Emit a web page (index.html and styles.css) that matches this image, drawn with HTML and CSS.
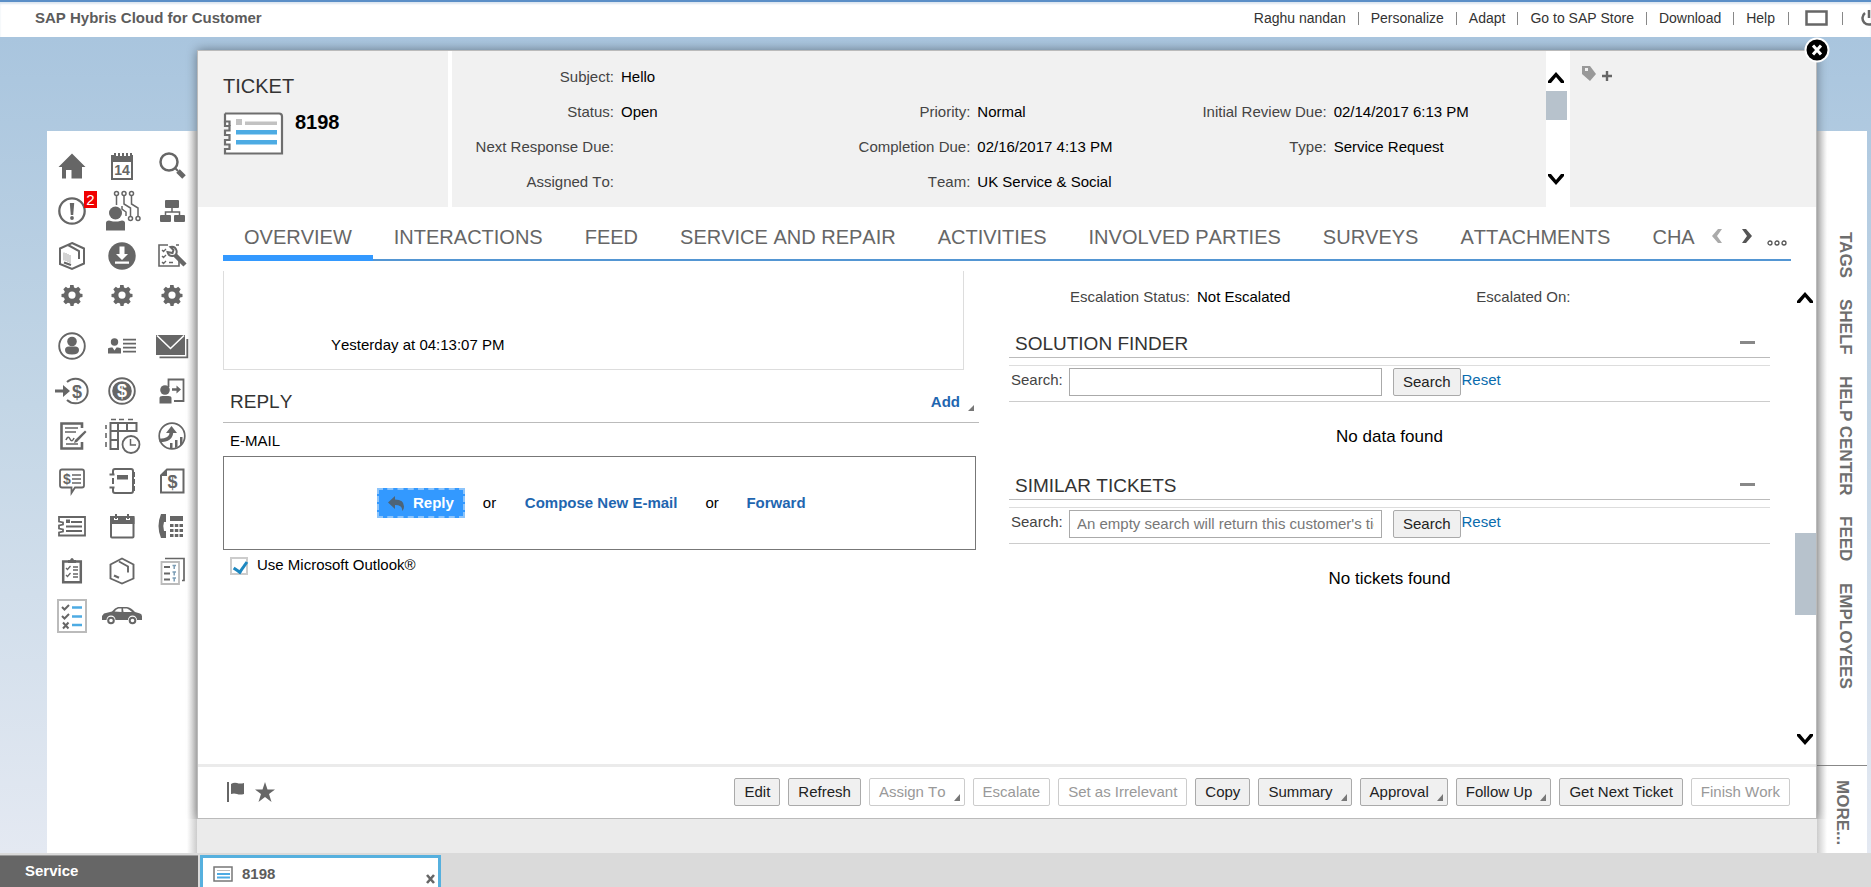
FILE: index.html
```html
<!DOCTYPE html>
<html lang="en">
<head>
    <meta charset="UTF-8">
    <meta name="viewport" content="width=device-width, initial-scale=1.0">
    <title>SAP Hybris Cloud for Customer</title>
    <link rel="stylesheet" href="styles.css">
</head>
<body>
    <header class="topbar">
        <div class="brand">SAP Hybris Cloud for Customer</div>
        <nav class="top-links">
            <a href="#">Raghu nandan</a>
            <a href="#">Personalize</a>
            <a href="#">Adapt</a>
            <a href="#">Go to SAP Store</a>
            <a href="#">Download</a>
            <a href="#">Help</a>
            <a href="#" aria-label="Window"><svg width="24" height="16" viewBox="0 0 24 16"><rect x="1.5" y="1.5" width="20" height="13" fill="none" stroke="#666" stroke-width="2.500"/></svg></a>
            <a href="#" aria-label="Log off"><svg width="20" height="18" viewBox="0 0 20 18"><path d="M6 4a6.500 6.500 0 1 0 8 0M10 1v8" fill="none" stroke="#666" stroke-width="2.500"/></svg></a>
        </nav>
    </header>

    <div class="workspace">
        <nav class="sidebar">
            <div class="icon-grid pinned">
                <a href="#" aria-label="Home"><svg class="icon" viewBox="0 0 40 40"><path class="f" d="M20 7.500 33.500 21H30v11.500H19.500V24H14v8.500h-4V21H6.500z"/></svg></a>
                <a href="#" aria-label="Calendar"><svg class="icon" viewBox="0 0 40 40"><path class="f" d="M9 9h3V7h2v3h2V7h2v3h2V7h2v3h2V7h2v3h2V7h2v2h1v25H9zm2 7v16h18V16z" fill-rule="evenodd"/><text x="20" y="29" text-anchor="middle" class="cal-day">14</text></svg></a>
                <a href="#" aria-label="Search"><svg class="icon" viewBox="0 0 40 40"><circle class="s" cx="17" cy="16" r="8.500" stroke-width="2.500"/><path class="s" d="m23 22 3 3" stroke-width="2"/><path class="s" d="m26 25 6 6" stroke-width="5"/></svg></a>

                <a href="#" aria-label="Alerts" class="has-badge"><svg class="icon" viewBox="0 0 40 40"><circle class="s" cx="20" cy="20" r="12.700" stroke-width="2.300"/><path class="f" d="M17.800 12h4.400l-1 12h-2.400z"/><circle class="f" cx="20" cy="27" r="1.900"/></svg><span class="badge">2</span></a>
                <a href="#" aria-label="Social"><svg class="icon" viewBox="0 0 40 40"><circle class="f" cx="13.500" cy="22" r="6.500"/><path class="f" d="M4 39.500V32q0-2.500 3-2.500l4 1h5l4-1q3 0 3 2.500v7.500z"/><g class="s" stroke-width="1.500"><circle cx="14.500" cy="2.500" r="2"/><circle cx="22" cy="2.500" r="2"/><circle cx="29.500" cy="2.500" r="2"/><circle cx="28.500" cy="27.500" r="2"/><circle cx="36" cy="27.500" r="2"/><path d="M14.500 4.500V14M22 4.500V13l6.500 4v8.500M29.500 4.500V13l6.500 4v8.500M20 15v3l4 3v4"/></g></svg></a>
                <a href="#" aria-label="Organization"><svg class="icon" viewBox="0 0 40 40"><rect class="f" x="13" y="9" width="14" height="8" rx="1"/><rect class="f" x="8" y="24" width="11" height="7" rx="1"/><rect class="f" x="22" y="24" width="11" height="7" rx="1"/><path class="s" d="M20 17v4M13.500 24v-3h14v3" stroke-width="1.500"/></svg></a>

                <a href="#" aria-label="Products"><svg class="icon" viewBox="0 0 40 40"><path class="s" d="m20 7 12 5.500v15L20 33 8 28V12.500zM16 9l11 6v8" stroke-width="2"/><path class="s light" d="M12 16.500v8M14 17v8M16 18v8M18 19v8" stroke-width="1.300"/><path class="s" d="m12 26.500 7 2.500" stroke-width="2"/></svg></a>
                <a href="#" aria-label="Downloads"><svg class="icon" viewBox="0 0 40 40"><circle class="f" cx="20" cy="20" r="13.700"/><path fill="#fff" d="M17.500 10.500h5V18H26l-6 6-6-6h3.500zM13 25.500h14v2.200H13z"/></svg></a>
                <a href="#" aria-label="Service check"><svg class="icon" viewBox="0 0 40 40"><path class="s" d="M16 9H7v21h20v-5M24 9h3" stroke-width="1.600"/><path class="s" d="m10 14 1.500 1.500L14 13M10 20l1.500 1.500L14 19M10 26l1.500 1.500L14 25M17 26.500h4" stroke-width="1.300"/><path class="s" d="M15.500 16q1 4.500 5.500 4 4.500-1 3.500-5.500-1.500-4.500-6-3.500l3 3-1 3z" stroke-width="2"/><path class="s" d="m23 19 10 10" stroke-width="4.500"/></svg></a>

                <a href="#" aria-label="Settings"><svg class="icon" viewBox="0 0 40 40"><path id="gear" class="f" fill-rule="evenodd" d="m18 10.200.400-.200h3.200l.400 2.500 2 .800 2.200-1.500 2.500 2.500-1.500 2.200.800 2 2.500.500v3l-2.500.500-.800 2 1.500 2.200-2.500 2.500-2.200-1.500-2 .800-.500 2.500h-3l-.500-2.500-2-.800-2.200 1.500-2.500-2.500 1.500-2.200-.800-2-2.500-.500v-3l2.500-.500.800-2-1.500-2.200 2.500-2.500 2.200 1.500 2-.800zM20 16.500a3.600 3.600 0 1 0 0 7.200 3.600 3.600 0 0 0 0-7.200z"/></svg></a>
                <a href="#" aria-label="Settings"><svg class="icon" viewBox="0 0 40 40"><use href="#gear"/></svg></a>
                <a href="#" aria-label="Settings"><svg class="icon" viewBox="0 0 40 40"><use href="#gear"/></svg></a>
            </div>

            <div class="icon-grid">
                <a href="#" aria-label="Customers"><svg class="icon" viewBox="0 0 40 40"><circle class="s" cx="20" cy="20" r="12.800" stroke-width="1.900"/><circle class="f" cx="20" cy="15.500" r="4.800"/><path class="f" d="M13 24q0-3.500 4-3.500h6q4 0 4 3.500 0 4.500-7 4.500T13 24z"/></svg></a>
                <a href="#" aria-label="Contacts"><svg class="icon" viewBox="0 0 40 40"><circle class="f" cx="12.500" cy="16" r="3.700"/><path class="f" d="M6 27.500V23q0-1.500 3-1.500h1.500l2 3 2-3H16q3 0 3 1.500v4.500z"/><path class="s" d="M21 13.700h13M21 17.700h13M21 21.700h13M21 25.700h13" stroke-width="1.700"/></svg></a>
                <a href="#" aria-label="E-mail"><svg class="icon" viewBox="0 0 40 40"><path class="f" d="M4 9h29v20H4z"/><path d="m5 9.500 13.500 13L32 9.500" fill="none" stroke="#fff" stroke-width="1.600"/><path class="s" d="M35.300 13v18.300H7.500" stroke-width="1.800"/></svg></a>

                <a href="#" aria-label="Leads"><svg class="icon" viewBox="0 0 40 40"><path class="s" d="M15 11a12.300 12.300 0 1 1 0 18" stroke-width="2"/><path class="f" d="M3 18.500h8V14l7 6-7 6v-4.500H3z"/><text x="25" y="26.500" class="dollar">$</text></svg></a>
                <a href="#" aria-label="Opportunities"><svg class="icon" viewBox="0 0 40 40"><circle class="s" cx="20" cy="20" r="12.800" stroke-width="1.900"/><circle class="f" cx="20" cy="20" r="9.800"/><text x="20" y="26" class="dollar inverse">$</text></svg></a>
                <a href="#" aria-label="Visits"><svg class="icon" viewBox="0 0 40 40"><path class="s" d="M16.500 16V8.500h15v21.500H22" stroke-width="1.800"/><circle class="f" cx="13" cy="19" r="4.800"/><path class="f" d="M7.500 32.500V27q0-2 3-2h6q3 0 3 2v5.500z"/><path class="s" d="M20 18.500h6" stroke-width="2.500"/><path class="f" d="m24.500 14.500 4.500 4-4.500 4z"/></svg></a>

                <a href="#" aria-label="Contracts"><svg class="icon" viewBox="0 0 40 40"><path class="s" d="M30 12V7.500H9.500V32.500H30V26" stroke-width="2.600"/><path class="s" d="M13 12h13M13 16h11M14 28h12M14 24q2-5 4-1t4-1" stroke-width="1.600"/><path class="f" d="m33 14.500 1.500 1.500-9.500 10-3 1 1-3z"/></svg></a>
                <a href="#" aria-label="Time recording"><svg class="icon" viewBox="0 0 40 40"><path class="s" d="M8.500 7h26v8H16v18H8.500zM16 7v8M25 7v8M8.500 15H16M8.500 24H16" stroke-width="2"/><path class="s" d="M9 3.500h5M17 3.500h5M26 3.500h5M4 9v4M4 17v5M4 26v5" stroke-width="1.600"/><circle cx="29" cy="28.500" r="8.500" fill="#fff" stroke="#666" stroke-width="1.800"/><path class="s" d="M28.500 23v6H34" stroke-width="1.500"/></svg></a>
                <a href="#" aria-label="Forecast"><svg class="icon" viewBox="0 0 40 40"><circle class="s" cx="20" cy="20" r="12.800" stroke-width="1.700"/><path class="f" d="M18 32v-5h2.500v5zm5 0V24h2.500v7zm5-2v-9h2.500v7z"/><path class="s" d="M7.500 24.500q12 0 12-9" stroke-width="3.500"/><path class="f" d="m14 17 5.500-7 5.500 7z"/></svg></a>

                <a href="#" aria-label="Quotes"><svg class="icon" viewBox="0 0 40 40"><path class="s" d="M10 8.500h20q2 0 2 2v14q0 2-2 2h-7l-3.500 5.500v-5.500H10q-2 0-2-2v-14q0-2 2-2z" stroke-width="1.800"/><text x="15" y="23" class="dollar small">$</text><path class="s" d="M20 14h9M20 18h9M20 22h9" stroke-width="1.700"/></svg></a>
                <a href="#" aria-label="Notebook"><svg class="icon" viewBox="0 0 40 40"><path class="s" d="M11 13v-3q0-2 2-2h16q2 0 2 2v20q0 2-2 2H13q-2 0-2-2v-3M11 17v6" stroke-width="2"/><path class="f" d="M15 14h11v4.500H15zM30 11h3v5h-3zm0 7h3v5h-3zm0 7h3v5h-3z"/><path class="s" d="M7.500 13.500h5M7.500 26.500h5" stroke-width="2"/></svg></a>
                <a href="#" aria-label="Invoices"><svg class="icon" viewBox="0 0 40 40"><path class="s" d="M15 8.500h16.500v23H9V14.500z" stroke-width="2"/><path class="f" d="M15 8v7H8.500z"/><text x="20.500" y="27" class="dollar">$</text></svg></a>

                <a href="#" aria-label="Tickets"><svg class="icon" viewBox="0 0 40 40"><path class="s" d="M7 11h26v18.500H7v-3l4-1v-2l-4-1v-3l4-1v-2l-4-1z" stroke-width="1.800"/><path class="f" d="M14 13.500h4v3.500h-4z"/><path class="s" d="M19 16h11M14 20.500h16M14 25h16" stroke-width="1.900"/></svg></a>
                <a href="#" aria-label="Appointments"><svg class="icon" viewBox="0 0 40 40"><rect class="s" x="9" y="11" width="22.500" height="20.500" rx="1" stroke-width="2"/><path class="f" d="M8 10h4v4h4v-4h8v4h4v-4h4.500v8H8zM13 8h2v5h-2zm12 0h2v5h-2z"/></svg></a>
                <a href="#" aria-label="Phone calls"><svg class="icon" viewBox="0 0 40 40"><path class="f" d="M9 8h5v8h-2q-1.500 4 0 9h2v7H9q-5-12 0-24zM18 10h13v5H18zM18 18h3.500v3H18zm4.800 0h3.500v3h-3.500zm4.700 0H31v3h-3.500zM18 23h3.500v3H18zm4.800 0h3.500v3h-3.500zm4.700 0H31v3h-3.500zM18 28h3.500v3H18zm4.800 0h3.500v3h-3.500zm4.700 0H31v3h-3.500z"/></svg></a>

                <a href="#" aria-label="Tasks"><svg class="icon" viewBox="0 0 40 40"><path class="s" d="M11.200 10.500h17.600v20.800H11.200z" stroke-width="2.500"/><path class="f" d="M16 12V9h2q2-4 4 0h2v3z"/><path class="s" d="m14 17 1.500 1.500L18.500 15M14 24l1.500 1.500L18.500 22M21 16h5M21 19h5M21 23h5M21 26h5" stroke-width="1.300"/></svg></a>
                <a href="#" aria-label="Packages"><svg class="icon" viewBox="0 0 40 40"><path class="s" d="m20 7.500 11.500 6v14L20 32.500 8.500 27.500v-14zM17 10.500l9 5v6" stroke-width="1.900"/><path class="s" d="m12 24.500 5 2.200" stroke-width="2.200"/></svg></a>
                <a href="#" aria-label="Surveys"><svg class="icon" viewBox="0 0 40 40"><path class="s" d="M13 7.500h19v22h-2" stroke-width="1.700"/><path class="s light" d="M9.500 11H27v22H9.500z" stroke-width="1.800"/><path class="s" d="M12 16h6M12 22.500h6M12 28.500h6" stroke-width="1.800"/><path d="M20.500 14.500H24M22.200 14v4M20.500 21H24M22.200 21v3.500M20.500 27H24M22.200 27v3.500" fill="none" stroke="#7c9db5" stroke-width="1.500"/></svg></a>

                <a href="#" aria-label="Checklists"><svg class="icon" viewBox="0 0 40 40"><path class="s light" d="M6 4h28v32H6z" stroke-width="2"/><path class="s" d="m10 11 2.500 2.500L17 9M10 20l2.500 2.500L17 18M11 26.500l5.500 6M16.500 26.500l-5.500 6" stroke-width="2"/><path d="M20 11.500h10M20 20.500h10M20 29h10" fill="none" stroke="#4dabe3" stroke-width="2.400"/></svg></a>
                <a href="#" aria-label="Vehicles"><svg class="icon" viewBox="0 0 40 40"><path class="f" d="M0 24v-4l2-2.500 8-2q3-4 6-4.500h9q4 .500 8 5l5 1.500q2 .500 2 3v3.500h-5a4.500 4.500 0 0 0-9 0H13.500a4.500 4.500 0 0 0-9 0z"/><path d="M12.500 15.500q2-2.500 4-3h3v3.500zM21 12.500h4q2 .500 5 3.500h-8.500z" fill="#fff"/><circle class="s" cx="9" cy="24.500" r="2.800" stroke-width="2"/><circle class="s" cx="30.500" cy="24.500" r="2.800" stroke-width="2"/></svg></a>
            </div>
        </nav>

        <div class="stage">
            <section class="panel">
                <button class="close-btn" aria-label="Close"><svg width="26" height="26" viewBox="0 0 26 26"><circle cx="13" cy="13" r="11.500" fill="#000" stroke="#fff" stroke-width="2"/><path d="m9 8.500 8 9M17 8.500l-8 9" stroke="#fff" stroke-width="3"/></svg></button>

                <div class="ticket-header">
                    <div class="ticket-id">
                        <h1>TICKET</h1>
                        <div class="ticket-number">
                            <svg width="61" height="43" viewBox="0 0 61 43"><path d="M2 1.500h54q3 0 3 3v37H2V37h4.500v-4.500H2V28h4.500v-5H2v-4.500h4.500V14H2V9.500" fill="#fff" stroke="#6e6e6e" stroke-width="2.200"/><path d="M2 1.500v8h4.500V14" fill="none" stroke="#6e6e6e" stroke-width="2.200"/><path d="M13 7h6v6h-6zM22 9.500h32V13H22z" fill="#c2c2c2"/><path d="M13 18h41v4.500H13zM13 28h41v4.500H13z" fill="#4dabe3"/></svg>
                            <strong>8198</strong>
                        </div>
                    </div>
                    <dl class="facts">
                        <div class="fact"><dt>Subject:</dt><dd>Hello</dd></div>
                        <div class="fact start"><dt>Status:</dt><dd>Open</dd></div>
                        <div class="fact"><dt>Priority:</dt><dd>Normal</dd></div>
                        <div class="fact"><dt>Initial Review Due:</dt><dd>02/14/2017 6:13 PM</dd></div>
                        <div class="fact"><dt>Next Response Due:</dt><dd></dd></div>
                        <div class="fact"><dt>Completion Due:</dt><dd>02/16/2017 4:13 PM</dd></div>
                        <div class="fact"><dt>Type:</dt><dd>Service Request</dd></div>
                        <div class="fact"><dt>Assigned To:</dt><dd></dd></div>
                        <div class="fact"><dt>Team:</dt><dd>UK Service &amp; Social</dd></div>
                    </dl>
                    <div class="scroller header-scroller">
                        <button aria-label="Scroll up"><svg width="16" height="12" viewBox="0 0 16 12"><path d="m0 10 8-9 8 9v2h-3L8 6l-5 6H0z"/></svg></button>
                        <div class="thumb"></div>
                        <button aria-label="Scroll down" class="down"><svg width="16" height="12" viewBox="0 0 16 12"><path d="m0 2 8 9 8-9V0h-3L8 6 3 0H0z"/></svg></button>
                    </div>
                    <div class="tagging">
                        <button aria-label="Add tag"><svg width="32" height="18" viewBox="0 0 32 18"><path d="M1 1h8l6 8-6 7L1 9zm3 2v3h3V3z" fill="#999" fill-rule="evenodd"/><path d="M21 11h10M26 6v10" stroke="#666" stroke-width="2.400"/></svg></button>
                    </div>
                </div>

                <div class="tabbar">
                    <nav class="tabs">
                        <a href="#" class="active">OVERVIEW</a>
                        <a href="#">INTERACTIONS</a>
                        <a href="#">FEED</a>
                        <a href="#">SERVICE AND REPAIR</a>
                        <a href="#">ACTIVITIES</a>
                        <a href="#">INVOLVED PARTIES</a>
                        <a href="#">SURVEYS</a>
                        <a href="#">ATTACHMENTS</a>
                        <a href="#">CHA</a>
                    </nav>
                    <div class="tab-controls">
                        <button aria-label="Previous tabs"><svg width="12" height="14" viewBox="0 0 12 14"><path d="M7 0h4L6 7l5 7H7L1 7z" fill="#aaa"/></svg></button>
                        <button aria-label="Next tabs"><svg width="12" height="14" viewBox="0 0 12 14"><path d="M5 0H1l5 7-5 7h4l6-7z" fill="#555"/></svg></button>
                        <button aria-label="More tabs" class="more"><svg width="20" height="6" viewBox="0 0 20 6"><g fill="none" stroke="#555" stroke-width="1.300"><circle cx="3" cy="3" r="2"/><circle cx="10" cy="3" r="2"/><circle cx="17" cy="3" r="2"/></g></svg></button>
                    </div>
                </div>

                <div class="content">
                    <div class="columns">
                        <div class="column">
                            <div class="message">Yesterday at 04:13:07 PM</div>
                            <div class="reply-title">
                                <h2>REPLY</h2>
                                <button class="add-btn">Add</button>
                            </div>
                            <div class="channel">E-MAIL</div>
                            <div class="reply-box">
                                <button class="reply-btn"><svg width="17" height="15" viewBox="0 0 17 15"><path d="M7 0v3.500q9 0 9 7 0 3-2 4.500 1-6-7-6V13L0 6.500z" fill="#4d6478"/></svg>Reply</button>
                                <span>or</span>
                                <a href="#">Compose New E-mail</a>
                                <span>or</span>
                                <a href="#">Forward</a>
                            </div>
                            <label class="outlook"><input type="checkbox" checked>Use Microsoft Outlook®</label>
                        </div>

                        <div class="column">
                            <dl class="escalation">
                                <div class="fact"><dt>Escalation Status:</dt><dd>Not Escalated</dd></div>
                                <div class="fact"><dt>Escalated On:</dt><dd></dd></div>
                            </dl>
                            <section class="finder">
                                <div class="finder-title">
                                    <h2>SOLUTION FINDER</h2>
                                    <button class="collapse" aria-label="Collapse"></button>
                                </div>
                                <form class="finder-search">
                                    <label for="solutionSearch">Search:</label>
                                    <input type="text" id="solutionSearch">
                                    <button type="button" class="btn">Search</button>
                                    <a href="#">Reset</a>
                                </form>
                                <p>No data found</p>
                            </section>
                            <section class="finder">
                                <div class="finder-title">
                                    <h2>SIMILAR TICKETS</h2>
                                    <button class="collapse" aria-label="Collapse"></button>
                                </div>
                                <form class="finder-search">
                                    <label for="ticketSearch">Search:</label>
                                    <input type="text" id="ticketSearch" placeholder="An empty search will return this customer's tickets">
                                    <button type="button" class="btn">Search</button>
                                    <a href="#">Reset</a>
                                </form>
                                <p>No tickets found</p>
                            </section>
                        </div>
                    </div>
                    <div class="scroller content-scroller">
                        <button aria-label="Scroll up"><svg width="16" height="12" viewBox="0 0 16 12"><path d="m0 10 8-9 8 9v2h-3L8 6l-5 6H0z"/></svg></button>
                        <div class="thumb"></div>
                        <button aria-label="Scroll down" class="down"><svg width="16" height="12" viewBox="0 0 16 12"><path d="m0 2 8 9 8-9V0h-3L8 6 3 0H0z"/></svg></button>
                    </div>
                </div>

                <footer class="actions">
                    <div class="marks">
                        <button aria-label="Flag"><svg width="18" height="20" viewBox="0 0 18 20"><path class="f" d="M0 0h2v20H0zM4 2q3-2 6-1t7 0v11q-4 1-7 0t-6 0z"/></svg></button>
                        <button aria-label="Favorite"><svg width="20" height="20" viewBox="0 0 20 20"><path class="f" d="m10 0 2.500 7.500H20l-6 4.500 2.500 8-6.500-5-6.500 5L6 12 0 7.500h7.500z"/></svg></button>
                    </div>
                    <div class="buttons">
                        <button class="btn">Edit</button>
                        <button class="btn">Refresh</button>
                        <button class="btn menu" disabled>Assign To</button>
                        <button class="btn" disabled>Escalate</button>
                        <button class="btn" disabled>Set as Irrelevant</button>
                        <button class="btn">Copy</button>
                        <button class="btn menu">Summary</button>
                        <button class="btn menu">Approval</button>
                        <button class="btn menu">Follow Up</button>
                        <button class="btn">Get Next Ticket</button>
                        <button class="btn" disabled>Finish Work</button>
                    </div>
                </footer>
            </section>
        </div>

        <aside class="rail">
            <nav class="rail-links">
                <a href="#">TAGS</a>
                <a href="#">SHELF</a>
                <a href="#">HELP CENTER</a>
                <a href="#">FEED</a>
                <a href="#">EMPLOYEES</a>
            </nav>
            <div class="rail-more"><a href="#">MORE...</a></div>
        </aside>
    </div>

    <div class="taskbar">
        <div class="service">Service</div>
        <div class="task">
            <svg width="20" height="16" viewBox="0 0 20 16"><rect x="1" y="1" width="18" height="14" fill="#fff" stroke="#777" stroke-width="1.500"/><path d="M4 4.500h13" stroke="#bbb"/><path d="M4 8h13M4 11.500h13" stroke="#4dabe3" stroke-width="2"/></svg>
            <a href="#">8198</a>
            <button aria-label="Close tab"><svg width="9" height="10" viewBox="0 0 9 10"><path d="m1 1 7 8M8 1 1 9" stroke="#666" stroke-width="2.600"/></svg></button>
        </div>
    </div>
</body>
</html>
```
FILE: styles.css
```css
* {
    box-sizing: border-box;
}

body {
    margin: 0;
    height: 100vh;
    display: flex;
    flex-direction: column;
    overflow: hidden;
    font-family: "Liberation Sans", Arial, sans-serif;
    font-size: 15px;
    font-kerning: none;
    line-height: 20px;
    color: #000;
    background: #dadada;
}

a {
    color: inherit;
    text-decoration: none;
}

button {
    font: inherit;
    font-kerning: none;
    color: inherit;
    background: none;
    border: none;
    padding: 0;
    cursor: pointer;
}

svg {
    display: block;
}

h1, h2, p, dl, dd {
    margin: 0;
}

h1, h2 {
    font-weight: normal;
    color: #333;
}

/* Top bar */
.topbar {
    flex: none;
    height: 37px;
    display: flex;
    justify-content: space-between;
    align-items: center;
    padding: 0 0 3px 35px;
    background: #fff;
    border-top: 2px solid #5b8fc7;
    box-shadow: inset 0 2px 2px #dde6f0;
}

.brand {
    font-weight: bold;
    color: #5c5c5c;
}

.top-links {
    display: flex;
    align-items: center;
    margin-right: -8px;
    font-size: 14px;
    color: #333;
}

.top-links a {
    display: flex;
    align-items: center;
}

.top-links a + a::before {
    content: "";
    width: 1px;
    height: 13px;
    margin: 0 12px;
    background: #888;
}

.top-links a:nth-child(n+7)::before {
    margin: 0 16px 0 13px;
}

/* Workspace */
.workspace {
    flex: 1;
    min-height: 0;
    display: flex;
    padding: 0 4px 0 47px;
    background: linear-gradient(#a9c5de, #c3d6e6 45%, #e4e9f2);
}

.sidebar {
    flex: none;
    width: 150px;
    margin-top: 94px;
    padding-top: 12px;
    background: linear-gradient(to left, #ccc, #fff 10px);
}

.icon-grid {
    display: grid;
    grid-template-columns: repeat(3, 50px);
    grid-auto-rows: 45px;
}

.icon-grid.pinned {
    grid-template-rows: 45px 45px 45px 34px;
    margin-bottom: 11px;
}

.icon-grid a {
    display: flex;
    justify-content: center;
    align-items: center;
    color: #666;
}

.icon {
    width: 40px;
    height: 40px;
    overflow: visible;
}

.f {
    fill: #666;
}

.s {
    fill: none;
    stroke: #666;
}

.s.light {
    stroke: #bbb;
}

.cal-day {
    font-size: 14px;
    font-weight: bold;
    fill: #666;
}

.dollar {
    font-size: 18px;
    font-weight: bold;
    text-anchor: middle;
    fill: #666;
}

.dollar.inverse {
    fill: #fff;
}

.dollar.small {
    font-size: 14px;
}

.has-badge {
    position: relative;
}

.badge {
    position: absolute;
    top: 3px;
    right: 0;
    width: 13px;
    height: 17px;
    line-height: 17px;
    text-align: center;
    color: #fff;
    background: #f00000;
}

/* Ticket panel */
.stage {
    flex: 1;
    min-width: 0;
    display: flex;
    flex-direction: column;
    padding-bottom: 34px;
    background: linear-gradient(#ebebeb, #ebebeb) bottom / 100% 34px no-repeat;
}

.panel {
    position: relative;
    z-index: 1;
    flex: 1;
    min-height: 0;
    margin-top: 13px;
    display: flex;
    flex-direction: column;
    background: #fff;
    border: 1px solid #bbb;
    box-shadow: 0 0 10px rgba(0, 0, 0, 0.4);
    clip-path: inset(-20px -20px 0 -20px);
}

.close-btn {
    position: absolute;
    top: -14px;
    right: -14px;
    z-index: 2;
}

.ticket-header {
    flex: none;
    display: flex;
    height: 156px;
    background: #f1f1f1;
}

.ticket-id {
    width: 254px;
    padding: 23px 0 0 25px;
    border-right: 4px solid #fff;
}

.ticket-id h1 {
    font-size: 20px;
    line-height: 24px;
}

.ticket-number {
    display: flex;
    gap: 11px;
    margin-top: 14px;
}

.ticket-number strong {
    font-size: 20px;
}

.facts {
    flex: 1;
    display: grid;
    grid-template-columns: repeat(3, 1fr);
    grid-auto-rows: 35px;
    padding: 16px 25px 0 0;
}

.fact {
    display: flex;
    gap: 7px;
    white-space: nowrap;
}

.fact.start {
    grid-column-start: 1;
}

.fact dt {
    width: 162px;
    text-align: right;
    color: #444;
}

.scroller {
    flex: none;
    display: flex;
    flex-direction: column;
    background: #fff;
}

.scroller button {
    padding: 0 2px;
}

.scroller .down {
    margin-top: auto;
}

.scroller .thumb {
    background: #b7c2cc;
}

.header-scroller {
    width: 24px;
    padding: 20px 3px 21px 0;
}

.header-scroller .thumb {
    height: 29px;
    margin-top: 8px;
}

.tagging {
    width: 246px;
    padding: 14px 11px;
}

/* Tabs */
.tabbar {
    flex: none;
    display: flex;
    height: 54px;
    margin: 0 25px;
    border-bottom: 2px solid #5496d3;
}

.tabs {
    flex: 1;
    min-width: 0;
    display: flex;
    margin-bottom: -2px;
    font-size: 20px;
    color: #666;
    white-space: nowrap;
}

.tabs a {
    padding: 20px 21px 0;
}

.tabs a:last-child {
    padding-right: 0;
}

.tabs .active {
    border-bottom: 6px solid #3399ff;
}

.tab-controls {
    display: flex;
    align-items: center;
    gap: 18px;
    padding: 5px 4px 0 13px;
}

.tab-controls .more {
    margin: 14px 0 0 -4px;
}

/* Scrolled content */
.content {
    flex: 1;
    min-height: 0;
    display: flex;
    margin-top: 10px;
}

.columns {
    flex: 1;
    min-width: 0;
    display: grid;
    grid-template-columns: 756fr 761fr;
    gap: 30px;
    padding: 0 25px;
    overflow: hidden;
}

.message {
    height: 99px;
    margin-right: 15px;
    padding: 64px 0 0 107px;
    border: 1px solid #ddd;
    border-top: none;
}

.reply-title {
    display: flex;
    justify-content: space-between;
    margin-top: 19px;
    padding: 0 5px 7px 7px;
    border-bottom: 1px solid #bbb;
}

.column h2 {
    font-size: 19px;
    line-height: 26px;
}

.add-btn {
    display: flex;
    align-items: center;
    gap: 8px;
    font-weight: bold;
    color: #1f66b0;
}

.add-btn::after {
    content: "";
    align-self: flex-end;
    margin-bottom: 4px;
    border-left: 6px solid transparent;
    border-bottom: 6px solid #777;
}

.channel {
    margin: 8px 7px 5px;
}

.reply-box {
    display: flex;
    align-items: center;
    height: 94px;
    margin-right: 3px;
    padding-left: 153px;
    border: 1px solid #777;
}

.reply-box span {
    width: 42px;
    padding-left: 18px;
}

.reply-box a {
    margin: 0 28px 0 0;
    font-weight: bold;
    color: #1f66b0;
}

.reply-box a:first-of-type {
    margin-right: 10px;
    margin-left: 18px;
}

.reply-box a:last-child {
    margin-left: 17px;
}

.reply-btn {
    display: flex;
    align-items: center;
    gap: 8px;
    height: 30px;
    padding: 0 9px;
    font-weight: bold;
    color: #fff;
    background: #3399ff;
    border: 2px dashed #8cc4fb;
}

.outlook {
    display: flex;
    align-items: center;
    gap: 9px;
    margin: 5px 7px;
}

.outlook input {
    appearance: none;
    width: 18px;
    height: 18px;
    margin: 2px 0 0;
    border: 2px solid #ccc;
    background: #fff;
}

.outlook input:checked::before {
    content: "";
    display: block;
    width: 6px;
    height: 11px;
    margin: 0 4px;
    border: solid #1c87c0;
    border-width: 0 3px 3px 0;
    transform: rotate(35deg);
}

.escalation {
    display: grid;
    grid-template-columns: 1fr 1fr;
    padding-top: 16px;
}

.escalation dt {
    width: 181px;
}

.finder-title {
    display: flex;
    justify-content: space-between;
    margin-top: 24px;
    padding: 0 15px 0 6px;
    border-bottom: 1px solid #bbb;
}

.collapse {
    width: 15px;
    height: 3px;
    margin-top: 10px;
    background: #888;
}

.finder-search {
    display: flex;
    height: 37px;
    margin-top: 7px;
    padding: 2px 2px 5px;
    border-top: 1px solid #ddd;
    border-bottom: 1px solid #ccc;
}

.finder-search label {
    width: 58px;
    padding-top: 2px;
    color: #444;
}

.finder-search input {
    width: 313px;
    padding: 0 7px;
    font: inherit;
    font-kerning: none;
    border: 1px solid #aaa;
}

.finder-search input::placeholder {
    color: #777;
}

.finder-search .btn {
    margin: 0 1px 0 11px;
}

.finder-search a {
    padding-top: 2px;
    color: #0a6cad;
}

.finder p {
    padding-top: 25px;
    font-size: 17px;
    text-align: center;
}

.finder + .finder .finder-title {
    margin-top: 26px;
}

.content-scroller {
    width: 21px;
    padding: 20px 0 18px;
}

.content-scroller .thumb {
    height: 82px;
    margin-top: 230px;
}

/* Footer buttons */
.actions {
    flex: none;
    display: flex;
    justify-content: space-between;
    align-items: center;
    height: 54px;
    padding: 0 26px 2px 29px;
    border-top: 3px solid #ebebeb;
}

.marks,
.buttons {
    display: flex;
    gap: 8px;
}

.marks {
    gap: 10px;
}

.btn {
    position: relative;
    height: 28px;
    padding: 0 9px;
    color: #222;
    background: #f0f0f0;
    border: 1px solid #aaa;
    border-radius: 2px;
    white-space: nowrap;
}

.btn:disabled {
    color: #999;
    background: #fff;
    border-color: #ccc;
}

.btn.menu {
    padding-right: 18px;
}

.btn.menu::after {
    content: "";
    position: absolute;
    right: 4px;
    bottom: 4px;
    border-left: 6px solid transparent;
    border-bottom: 7px solid #777;
}

/* Right rail */
.rail {
    flex: none;
    width: 50px;
    margin-top: 94px;
    display: flex;
    flex-direction: column;
    background: linear-gradient(to right, #ccc, #fff 10px);
    font-size: 17px;
    font-weight: bold;
    color: #6e6e6e;
}

.rail a {
    writing-mode: vertical-rl;
}

.rail-links {
    flex: 1;
    display: flex;
    flex-direction: column;
    align-items: center;
    gap: 21px;
    padding: 101px 0 0 6px;
}

.rail-more {
    display: flex;
    justify-content: center;
    height: 88px;
    padding-top: 14px;
    border-top: 1px solid #888;
}

/* Task bar */
.taskbar {
    flex: none;
    display: flex;
    height: 34px;
    padding-top: 2px;
    background: #dadada;
    font-weight: bold;
}

.service {
    width: 198px;
    padding: 5px 25px;
    color: #fff;
    background: #666;
    border-top: 1px solid #999;
}

.task {
    display: flex;
    align-items: center;
    width: 241px;
    margin-left: 2px;
    padding: 2px 3px 0 10px;
    color: #5c5c5c;
    background: #fff;
    border: 3px solid #56b0de;
    border-bottom: none;
}

.task a {
    flex: 1;
    padding-left: 9px;
}

.task button {
    margin-top: 10px;
}
```
